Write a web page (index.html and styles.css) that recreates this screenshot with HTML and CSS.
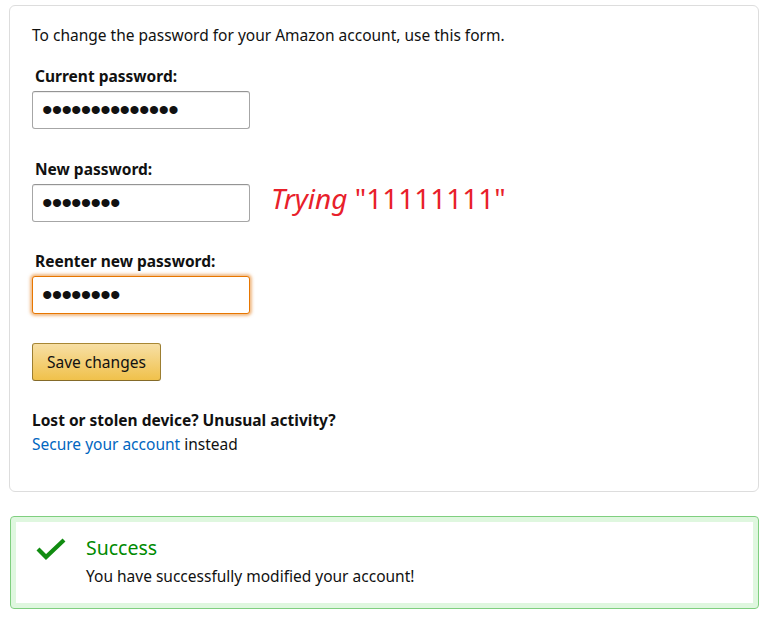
FILE: index.html
```html
<!DOCTYPE html>
<html lang="en">
<head>
<meta charset="utf-8">
<title>Change password</title>
<link rel="stylesheet" href="styles.css">
</head>
<body>
<div class="page">
  <div class="card">
    <p class="intro">To change the password for your Amazon account, use this form.</p>
    <form class="form">
      <div class="group">
        <label class="label" for="cur">Current password:</label>
        <input class="field" id="cur" type="password" value="aaaaaaaaaaaaaa">
      </div>
      <div class="group">
        <label class="label" for="new">New password:</label>
        <div class="row">
          <input class="field" id="new" type="password" value="11111111">
          <span class="note"><em>Trying</em> "11111111"</span>
        </div>
      </div>
      <div class="group">
        <label class="label" for="re">Reenter new password:</label>
        <input class="field focus" id="re" type="password" value="11111111">
      </div>
      <div class="group">
        <button class="btn" type="button">Save changes</button>
      </div>
    </form>
    <p class="lost">Lost or stolen device? Unusual activity?</p>
    <p class="secure"><a class="link" href="#">Secure your account</a> instead</p>
  </div>
  <div class="alert">
    <svg class="check" width="30" height="24" viewBox="0 0 30 24"><polyline points="2,12 10,20 28,3" fill="none" stroke="#118c11" stroke-width="4.2" stroke-linecap="butt" stroke-linejoin="miter"/></svg>
    <div class="alert-body">
      <div class="alert-title">Success</div>
      <div class="alert-text">You have successfully modified your account!</div>
    </div>
  </div>
</div>
</body>
</html>
```

FILE: styles.css
```css
html, body {
  margin: 0;
  padding: 0;
  background: #fff;
}
body {
  font-family: "Noto Sans", "Open Sans", sans-serif;
  font-size: 15.5px;
  color: #111;
}
.page {
  padding: 5px 13px 0 9px;
}
.card {
  border: 1px solid #ddd;
  border-radius: 6px;
  padding: 20px 22px 37px 22px;
}
.intro {
  margin: 0;
  line-height: 19px;
}
.form {
  margin-top: 20px;
}
.group + .group {
  margin-top: 28.5px;
}
.label {
  display: block;
  font-weight: 700;
  line-height: 19px;
  padding: 2px 0 0 3px;
  margin-bottom: 5px;
}
.row {
  display: flex;
  align-items: flex-start;
  gap: 21px;
}
.field {
  display: block;
  box-sizing: border-box;
  width: 218px;
  height: 38px;
  margin: 0;
  padding: 0 9px;
  border: 1px solid #a6a6a6;
  border-top-color: #949494;
  border-radius: 3px;
  font-family: "Liberation Sans", sans-serif;
  font-size: 30px;
  letter-spacing: -0.8px;
  color: #111;
  outline: none;
  box-shadow: 0 1px 0 rgba(255,255,255,.5), 0 1px 0 rgba(0,0,0,.07) inset;
}
.field.focus {
  border-color: #e77600;
  box-shadow: 0 0 3px 2px rgba(228,121,17,.5);
}
.note {
  color: #e8202a;
  font-size: 28px;
  line-height: 29px;
  font-family: "Noto Sans", sans-serif;
}
.note em {
  font-style: italic;
}
.btn {
  display: block;
  box-sizing: border-box;
  height: 38px;
  padding: 0 14px;
  border: 1px solid #a88734;
  border-color: #a88734 #9c7e31 #846a29;
  border-radius: 3px;
  background: linear-gradient(to bottom, #f7dfa5, #f0c14b);
  font-family: "Noto Sans", sans-serif;
  font-size: 15.5px;
  color: #111;
  cursor: pointer;
}
.lost {
  margin: 30px 0 0;
  font-weight: 700;
  line-height: 19px;
}
.secure {
  margin: 5px 0 0;
  line-height: 19px;
}
.link {
  color: #0066c0;
  text-decoration: none;
}
.alert {
  margin: 24px 0 0 1px;
  display: flex;
  align-items: flex-start;
  gap: 20px;
  border: 1px solid #7fcf7f;
  border-radius: 4px;
  box-shadow: inset 0 0 0 5px #dff7df;
  padding: 19px 20px 22px 25px;
}
.check {
  margin-top: 1px;
  flex: none;
}
.alert-title {
  color: #008a00;
  font-size: 19.5px;
  line-height: 24px;
}
.alert-text {
  margin-top: 7px;
  font-size: 15.5px;
  line-height: 19px;
  color: #111;
}
```
